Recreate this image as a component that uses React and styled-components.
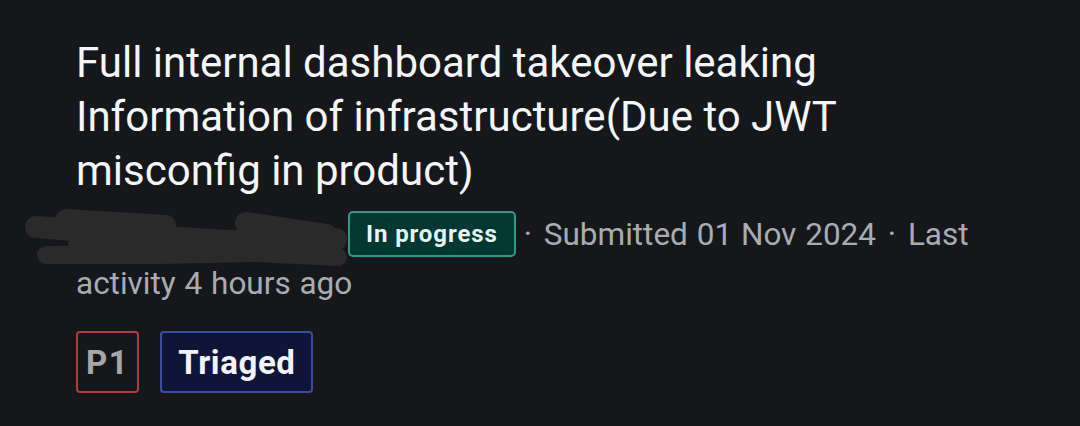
import React from 'react'
import styled, { createGlobalStyle } from 'styled-components'

const Global = createGlobalStyle`
  html, body {
    margin: 0;
    background: #15171b;
  }
  body {
    font-family: Roboto, "Liberation Sans", sans-serif;
  }
`

const Page = styled.div`
  width: 1080px;
  height: 426px;
  box-sizing: border-box;
  padding: 36px 76px 0 76px;
  overflow: hidden;
`

const Title = styled.h1`
  margin: 0;
  font-size: 42px;
  line-height: 54px;
  font-weight: 400;
  color: #f4f5f7;
  width: 880px;
`

const Meta = styled.div`
  margin-top: 12px;
  font-size: 31.5px;
  line-height: 49px;
  color: #a9acb2;
  width: 928px;
  word-spacing: 1px;
`

const Redaction = styled.svg`
  display: inline-block;
  vertical-align: middle;
  width: 272px;
  height: 44px;
  overflow: visible;
`

const Status = styled.span`
  display: inline-block;
  vertical-align: middle;
  box-sizing: border-box;
  height: 46px;
  padding: 0 16px;
  line-height: 42px;
  font-size: 24px;
  font-weight: 700;
  letter-spacing: 0.9px;
  word-spacing: 0;
  color: #e8f4f1;
  background: #013831;
  border: 2px solid #2e9c84;
  border-radius: 5px;
  margin-right: 5px;
  margin-top: -6px;
`

const Sep = styled.span`
  margin: 0 3px;
`

const Tags = styled.div`
  display: flex;
  gap: 21px;
  margin-top: 23px;
`

const Tag = styled.span`
  box-sizing: border-box;
  height: 62px;
  padding: 0 ${p => p.$pad}px;
  display: flex;
  align-items: center;
  font-size: 33px;
  font-weight: 700;
  letter-spacing: ${p => p.$ls}px;
  color: ${p => p.$color};
  background: ${p => p.$bg};
  border: 2px solid ${p => p.$border};
  border-radius: 4px;
`

export default function App() {
  return (
    <Page>
      <Global />
      <Title>
        Full internal dashboard takeover leaking Information of infrastructure(Due to JWT misconfig in product)
      </Title>
      <Meta>
        <Redaction viewBox="0 0 272 44">
          <g stroke="#2a2a2b" strokeLinecap="round" fill="none">
            <path d="M-10 4 L90 10" strokeWidth="20" />
            <path d="M-40 12 L60 20 L150 26 L260 24" strokeWidth="22" />
            <path d="M-30 40 L80 40 L180 38 L262 42" strokeWidth="18" />
            <path d="M170 8 L250 20" strokeWidth="22" />
            <path d="M0 30 L120 30 L200 32" strokeWidth="16" />
          </g>
        </Redaction>
        <Status>In progress</Status>
        <Sep>·</Sep> Submitted 01 Nov 2024 <Sep>·</Sep> Last activity 4 hours ago
      </Meta>
      <Tags>
        <Tag $pad={8} $ls={1.5} $color="#a7a7a9" $bg="transparent" $border="#b23b3e">P1</Tag>
        <Tag $pad={16} $ls={0.6} $color="#f2f3f6" $bg="#0f1439" $border="#3e4c9e">Triaged</Tag>
      </Tags>
    </Page>
  )
}
